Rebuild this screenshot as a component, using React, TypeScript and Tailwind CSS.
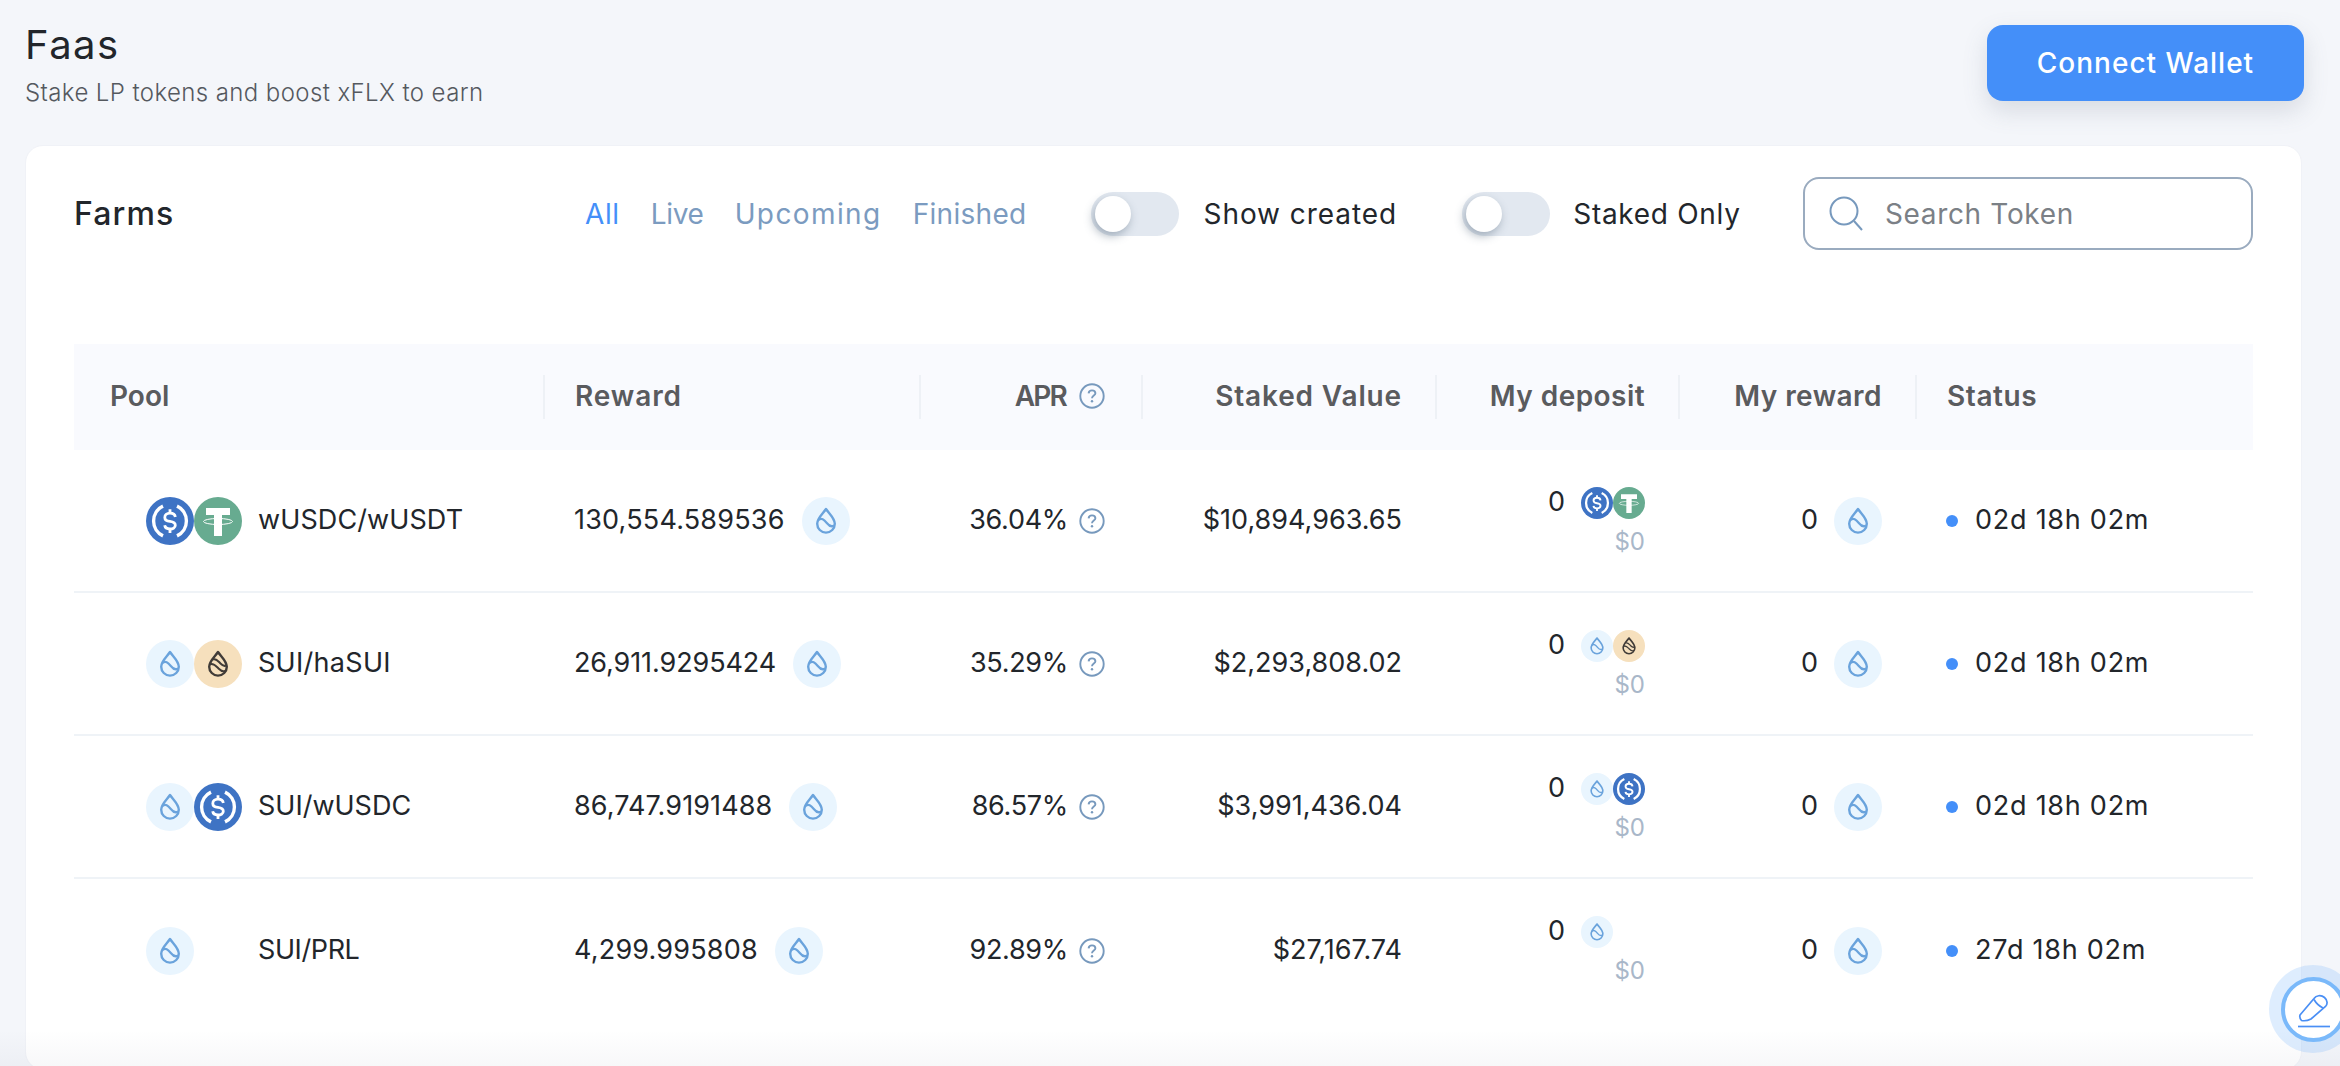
import React from "react";

const DROP = "M24 12C27 16.5 32.8 21 32.8 26.8A8.8 8.8 0 0 1 15.2 26.8C15.2 21 21 16.5 24 12Z";

function Sui({ size }: { size: number }) {
  return (
    <svg width={size} height={size} viewBox="0 0 48 48" className="shrink-0">
      <circle cx="24" cy="24" r="24" fill="#e9f5fe" />
      <path d={DROP} fill="none" stroke="#6aa3dc" strokeWidth="2.4" strokeLinejoin="round" />
      <path d="M16.5 23C19.5 20.5 22 22.5 24.8 26C27 28.8 29.8 30 32 28.5" fill="none" stroke="#6aa3dc" strokeWidth="2.2" />
    </svg>
  );
}

function HaSui({ size }: { size: number }) {
  return (
    <svg width={size} height={size} viewBox="0 0 48 48" className="shrink-0">
      <circle cx="24" cy="24" r="24" fill="#f6e0bd" />
      <path d={DROP} fill="none" stroke="#413c38" strokeWidth="2.4" strokeLinejoin="round" />
      <path d="M19 19.5C22 18 24 21 26.5 23.5C28.5 25.5 31 26.5 32.5 25" fill="none" stroke="#413c38" strokeWidth="2" />
      <path d="M15.5 24.5C19.5 22.5 22 26 24.5 28.5C27 31 29.5 32 31.5 30.5" fill="none" stroke="#413c38" strokeWidth="2" />
    </svg>
  );
}

function Usdc({ size }: { size: number }) {
  return (
    <svg width={size} height={size} viewBox="0 0 48 48" className="shrink-0">
      <circle cx="24" cy="24" r="24" fill="#3e73c4" />
      <g fill="none" stroke="#fff" strokeWidth="3.4">
        <path d="M17 9.1A16.5 16.5 0 0 0 17 38.9" />
        <path d="M31 9.1A16.5 16.5 0 0 1 31 38.9" />
        <path strokeWidth="2.8" d="M29.3 20C29 17.5 27 16.2 24 16.2C20.8 16.2 18.8 18 18.8 20.4C18.8 23 20.8 24 24 24.4C27.2 24.8 29.3 25.8 29.3 28.3C29.3 30.6 27 32 24 32C21 32 19 30.6 18.7 28.3" />
        <path strokeWidth="2.8" d="M24 12.2V16.2M24 32V36" />
      </g>
    </svg>
  );
}

function Usdt({ size }: { size: number }) {
  return (
    <svg width={size} height={size} viewBox="0 0 48 48" className="shrink-0">
      <circle cx="24" cy="24" r="24" fill="#67ab90" />
      <path d="M12 11H36V18H28V39H20V18H12Z" fill="#fff" />
      <ellipse cx="24" cy="24.5" rx="14.5" ry="3" fill="none" stroke="#fff" strokeWidth="1" />
    </svg>
  );
}

type Tok = "sui" | "hasui" | "usdc" | "usdt";

function Token({ t, size }: { t: Tok; size: number }) {
  if (t === "sui") return <Sui size={size} />;
  if (t === "hasui") return <HaSui size={size} />;
  if (t === "usdc") return <Usdc size={size} />;
  return <Usdt size={size} />;
}

function Toggle() {
  return (
    <div className="relative h-[44px] w-[88px] shrink-0 rounded-full bg-[#e2e8f0]">
      <div className="absolute left-[4px] top-[4px] h-[36px] w-[36px] rounded-full bg-white shadow-[-2px_4px_10px_rgba(80,100,120,0.45)]" />
    </div>
  );
}

function Help({ size }: { size: number }) {
  return (
    <svg width={size} height={size} viewBox="0 0 26 26" className="shrink-0">
      <circle cx="13" cy="13" r="11.7" fill="none" stroke="#7799bd" strokeWidth="1.9" />
      <path d="M9.6 10.3C9.8 8.4 11.2 7.4 13 7.4C15 7.4 16.4 8.6 16.4 10.3C16.4 12.4 13 12.8 13 15.2" fill="none" stroke="#7799bd" strokeWidth="1.9" />
      <circle cx="13" cy="18.3" r="1.2" fill="#7799bd" />
    </svg>
  );
}

const COLS = "grid grid-cols-[469px_376px_222px_294px_243px_237px_338px]";

const rows: {
  pair: [Tok, Tok | null];
  name: string;
  nameTrack: string;
  reward: string;
  rewardTrack: string;
  apr: string;
  staked: string;
  time: string;
}[] = [
  { pair: ["usdc", "usdt"], name: "wUSDC/wUSDT", nameTrack: "tracking-[0.1px]", reward: "130,554.589536", rewardTrack: "tracking-[0.2px]", apr: "36.04%", staked: "$10,894,963.65", time: "02d 18h 02m" },
  { pair: ["sui", "hasui"], name: "SUI/haSUI", nameTrack: "tracking-[0.3px]", reward: "26,911.9295424", rewardTrack: "tracking-[-0.1px]", apr: "35.29%", staked: "$2,293,808.02", time: "02d 18h 02m" },
  { pair: ["sui", "usdc"], name: "SUI/wUSDC", nameTrack: "", reward: "86,747.9191488", rewardTrack: "tracking-[0.1px]", apr: "86.57%", staked: "$3,991,436.04", time: "02d 18h 02m" },
  { pair: ["sui", null], name: "SUI/PRL", nameTrack: "tracking-[-0.4px]", reward: "4,299.995808", rewardTrack: "tracking-[0.2px]", apr: "92.89%", staked: "$27,167.74", time: "27d 18h 02m" },
];

function Head({ className, children }: { className: string; children: React.ReactNode }) {
  return (
    <div className={"flex h-[44px] items-center pb-[3px] text-[28px] font-semibold text-[#5a5b5e] " + className}>
      {children}
    </div>
  );
}

export default function App() {
  return (
    <div className="relative h-screen w-full overflow-hidden bg-[#f4f6fa] font-['Inter',sans-serif] text-[#22262b]">
      <header className="flex h-[145px] items-start justify-between pl-[25px] pr-[36px]">
        <div className="pt-[23px]">
          <h1 className="text-[40px] font-normal leading-[44px] tracking-[1.5px]">Faas</h1>
          <p className="mt-[11px] text-[24px] font-light leading-[30px] tracking-[0.4px] text-[#55595f]">
            Stake LP tokens and boost xFLX to earn
          </p>
        </div>
        <button className="mt-[25px] h-[76px] w-[317px] rounded-[16px] bg-[#448ff9] text-[28px] font-medium tracking-[1px] text-white shadow-[0_10px_24px_rgba(90,100,120,0.18)]">
          Connect Wallet
        </button>
      </header>

      <main className="ml-[25px] mr-[38px] h-[925px] rounded-[18px] border border-[#f0f2f7] bg-white px-[48px] pt-[31px]">
        <div className="flex h-[73px] items-center">
          <h2 className="w-[511px] shrink-0 text-[32px] font-medium tracking-[1.1px]">Farms</h2>
          <nav className="flex gap-[31px] text-[28px] text-[#7b9bc0]">
            <span className="tracking-[0.6px] text-[#448ff9]">All</span>
            <span className="tracking-[-0.3px]">Live</span>
            <span className="tracking-[1.4px]">Upcoming</span>
            <span className="tracking-[0.3px]">Finished</span>
          </nav>
          <div className="ml-[65px] flex items-center gap-[24px]">
            <Toggle />
            <span className="text-[28px] tracking-[0.95px]">Show created</span>
          </div>
          <div className="ml-[65px] flex items-center gap-[23px]">
            <Toggle />
            <span className="text-[28px] tracking-[0.7px]">Staked Only</span>
          </div>
          <label className="ml-auto flex h-[73px] w-[450px] items-center gap-[22px] rounded-[16px] border-2 border-[#9aabbf] pl-[24px]">
            <svg width="34" height="36" viewBox="0 0 34 36" className="shrink-0">
              <circle cx="15" cy="15" r="13.5" fill="none" stroke="#7799bd" strokeWidth="2" />
              <path d="M25 25L33 34" stroke="#7799bd" strokeWidth="2" />
            </svg>
            <input
              placeholder="Search Token"
              className="w-[300px] bg-transparent text-[28px] tracking-[0.65px] outline-none placeholder:text-[#7b8086]"
            />
          </label>
        </div>

        <div className={COLS + " mt-[94px] h-[106px] items-center bg-[#f9fafe]"}>
          <Head className="pl-[36px]">Pool</Head>
          <Head className="border-l-2 border-[#eef1f6] pl-[30px] tracking-[0.9px]">Reward</Head>
          <Head className="justify-end gap-[13px] border-l-2 border-[#eef1f6] pr-[36px] tracking-[-1.8px]">
            APR <Help size={26} />
          </Head>
          <Head className="justify-end border-l-2 border-[#eef1f6] pr-[33px] tracking-[0.85px]">Staked Value</Head>
          <Head className="justify-end border-l-2 border-[#eef1f6] pr-[33px] tracking-[0.45px]">My deposit</Head>
          <Head className="justify-end border-l-2 border-[#eef1f6] pr-[33px] tracking-[0.45px]">My reward</Head>
          <Head className="border-l-2 border-[#eef1f6] pl-[30px] tracking-[0.6px]">Status</Head>
        </div>

        {rows.map((r, i) => (
          <div
            key={r.name}
            className={COLS + " h-[143px] items-center text-[27px] " + (i < 3 ? "border-b-2 border-[#eff3f7]" : "")}
          >
            <div className="flex items-center pl-[72px]">
              <Token t={r.pair[0]} size={48} />
              {r.pair[1] ? <Token t={r.pair[1]} size={48} /> : <div className="w-[48px]" />}
              <span className={"ml-[16px] " + r.nameTrack}>{r.name}</span>
            </div>
            <div className="flex items-center gap-[17px] pl-[31px]">
              <span className={r.rewardTrack}>{r.reward}</span>
              <Sui size={48} />
            </div>
            <div className="flex items-center justify-end gap-[11px] pr-[36px]">
              <span className="tracking-[-0.3px]">{r.apr}</span>
              <Help size={26} />
            </div>
            <div className="pr-[33px] text-right">{r.staked}</div>
            <div className="flex flex-col items-end self-start pr-[33px] pt-[37px]">
              <div className="flex h-[32px] items-center gap-[16px]">
                <span className="pb-[2px]">0</span>
                <div className="flex w-[64px]">
                  <Token t={r.pair[0]} size={32} />
                  {r.pair[1] && <Token t={r.pair[1]} size={32} />}
                </div>
              </div>
              <span className="mt-[9px] text-[24px] leading-[28px] text-[#a9b7c9]">$0</span>
            </div>
            <div className="flex items-center justify-end gap-[16px] pr-[33px]">
              <span>0</span>
              <Sui size={48} />
            </div>
            <div className="flex items-center gap-[17px] pl-[31px]">
              <span className="h-[12px] w-[12px] rounded-full bg-[#448ff9]" />
              <span className="tracking-[0.75px]">{r.time}</span>
            </div>
          </div>
        ))}
      </main>

      <div className="pointer-events-none absolute bottom-0 left-0 h-[36px] w-full bg-gradient-to-b from-transparent to-[rgba(40,50,90,0.035)]" />

      <div className="absolute left-[2269px] top-[965px] flex h-[88px] w-[88px] items-center justify-center rounded-full bg-[rgba(122,185,250,0.25)]">
        <div className="flex h-[65px] w-[65px] items-center justify-center rounded-full border-[4px] border-[#7ab9fa] bg-white">
          <svg width="60" height="60" viewBox="0 0 60 60" className="shrink-0 -m-[4px]">
            <path d="M17 36L31 19.5C33 16.5 38 15.5 41.5 18.5C45 21.5 44.5 25.5 42.5 27.5L28 40C25 41.5 21 42 18.5 41.5C17 40 16.5 38 17 36Z" fill="none" stroke="#4a8ff5" strokeWidth="1.7" />
            <path d="M31 20.5C33 24 36 27 40 29" fill="none" stroke="#4a8ff5" strokeWidth="1.7" />
            <path d="M15 47.5H47" stroke="#4a8ff5" strokeWidth="1.7" />
          </svg>
        </div>
      </div>
    </div>
  );
}
